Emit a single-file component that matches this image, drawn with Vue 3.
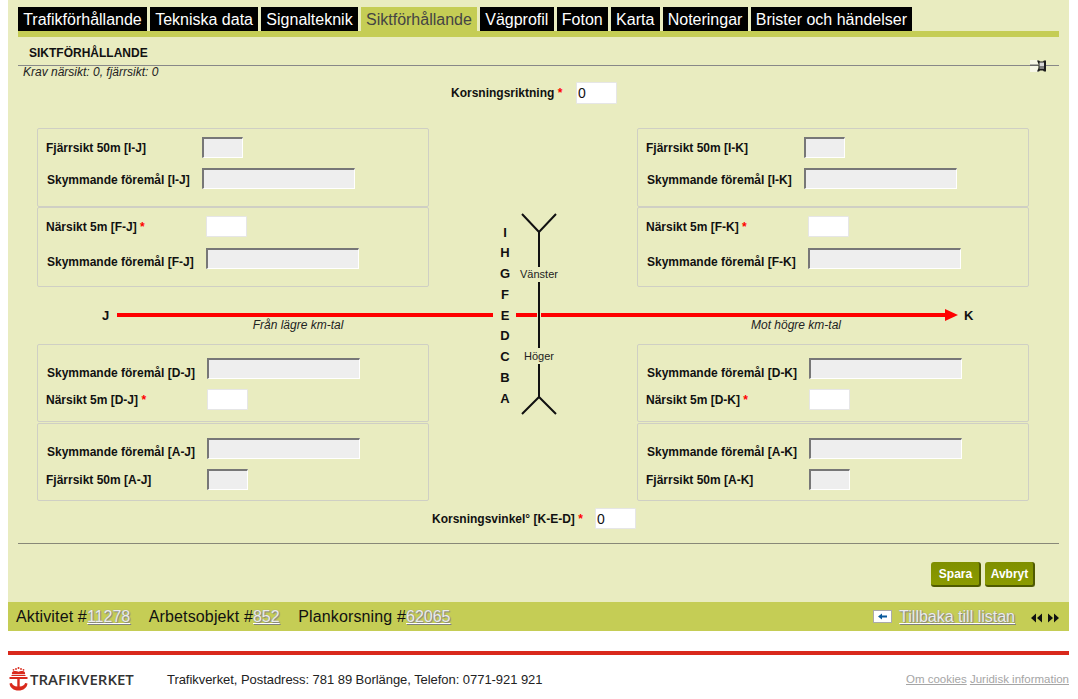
<script setup>
const tabs = ['Trafikförhållande','Tekniska data','Signalteknik','Siktförhållande','Vägprofil','Foton','Karta','Noteringar','Brister och händelser']
const row = (label, wide, disabled, dy = 0, req = false, indent = 0) => ({ label, wide, disabled, dy, req, indent })
const sides = (s, w) => [
  { cls: 'p1', col: w, top: 8, gap: 10, rows: [row(`Fjärrsikt 50m [I-${s}]`, false, true), row(`Skymmande föremål [I-${s}]`, true, true, 1, false, 1)] },
  { cls: 'p2', col: w + 4, top: 8, gap: 11, rows: [row(`Närsikt 5m [F-${s}]`, false, false, 0, true), row(`Skymmande föremål [F-${s}]`, true, true, 3, false, 1)] },
  { cls: 'p3', col: w + 5, top: 13, gap: 10, rows: [row(`Skymmande föremål [D-${s}]`, true, true, 4, false, 1), row(`Närsikt 5m [D-${s}]`, false, false, 0, true)] },
  { cls: 'p4', col: w + 5, top: 14, gap: 10, rows: [row(`Skymmande föremål [A-${s}]`, true, true, 3, false, 1), row(`Fjärrsikt 50m [A-${s}]`, false, true)] },
]
const left = sides('J', 164)
const right = sides('K', 166)
const letters = ['I','H','G','F','E','D','C','B','A']
const stacks = [
  { cls: 'col-left r-top', panels: left.slice(0, 2) },
  { cls: 'col-right r-top', panels: right.slice(0, 2) },
  { cls: 'col-left r-bottom', panels: left.slice(2) },
  { cls: 'col-right r-bottom', panels: right.slice(2) },
]
</script>

<template>
  <div class="page">
    <main class="main">
      <nav class="tabs">
        <a v-for="t in tabs" :key="t" class="tab" :class="{ active: t === 'Siktförhållande' }">{{ t }}</a>
      </nav>
      <div class="tabbar"></div>

      <div class="heading">
        <h2>SIKTFÖRHÅLLANDE</h2>
        <svg class="pin" width="17" height="12" viewBox="0 0 17 12">
          <rect width="8" height="12" fill="#f6f6e6"/>
          <rect x="0" y="4.500" width="8" height="1.500" fill="#666"/>
          <path d="M7 .5h2l1 1h3l1-1h2v11h-2l-1-1h-3l-1 1H7l1.500-3.500V4z" fill="#1c1c1c"/>
          <rect x="9.500" y="2.500" width="4.500" height="4" fill="#d8d8d8"/>
          <rect x="9.500" y="6.500" width="4.500" height="2.500" fill="#808080"/>
        </svg>
      </div>
      <p class="krav">Krav närsikt: 0, fjärrsikt: 0</p>

      <div class="direction">
        <label>Korsningsriktning <span class="req">*</span></label>
        <input class="field" value="0" />
      </div>

      <section class="board">
        <div v-for="s in stacks" :key="s.cls" class="stack" :class="s.cls">
          <div v-for="p in s.panels" :key="p.cls" class="panel" :class="p.cls" :style="{ paddingTop: p.top + 'px', rowGap: p.gap + 'px', gridTemplateColumns: p.col + 'px auto' }">
            <template v-for="r in p.rows" :key="r.label">
              <label :style="{ marginTop: r.dy * 2 + 'px', paddingLeft: 8 + r.indent + 'px' }">{{ r.label }} <span v-if="r.req" class="req">*</span></label>
              <input class="field" :class="{ wide: r.wide }" :disabled="r.disabled" />
            </template>
          </div>
        </div>

        <div class="diagram">
          <svg width="992" height="373" viewBox="0 0 992 373">
            <g fill="#ff0000">
              <rect x="80" y="185" width="376" height="4"/>
              <rect x="479" y="185" width="21" height="4"/>
              <rect x="504" y="185" width="405" height="4"/>
              <path d="M908 181l13 6-13 6z"/>
            </g>
            <g fill="none" stroke="#111" stroke-width="2">
              <path d="M485 86l17 18 17-18"/>
              <path d="M485 286l17-17 17 17"/>
              <path d="M502 104v35M502 154v66M502 236v33"/>
            </g>
          </svg>
          <div class="letters"><span v-for="l in letters" :key="l">{{ l }}</span></div>
          <span class="end end-j">J</span>
          <span class="end end-k">K</span>
          <span class="cap cap-l">Från lägre km-tal</span>
          <span class="cap cap-r">Mot högre km-tal</span>
          <span class="turn turn-v">Vänster</span>
          <span class="turn turn-h">Höger</span>
        </div>
      </section>

      <div class="angle">
        <label>Korsningsvinkel° [K-E-D] <span class="req">*</span></label>
        <input class="field" value="0" />
      </div>

      <hr class="rule" />

      <div class="actions">
        <button class="btn">Spara</button>
        <button class="btn">Avbryt</button>
      </div>
    </main>

    <div class="status">
      <span class="crumb">Aktivitet #<a class="ghost">11278</a></span>
      <span class="crumb">Arbetsobjekt #<a class="ghost">852</a></span>
      <span class="crumb">Plankorsning #<a class="ghost">62065</a></span>
      <span class="status-right">
        <svg class="back" width="19" height="13" viewBox="0 0 19 13">
          <rect x=".5" y=".5" width="18" height="12" fill="#fff" stroke="#aaa"/>
          <path d="M5 6.500l4-3v2h5v2H9v2z" fill="#0b5a9c"/>
        </svg>
        <a class="ghost">Tillbaka till listan</a>
        <svg class="pager" width="28" height="10" viewBox="0 0 28 10">
          <path d="M0 5l5-4.500v9zM6 5l5-4.500v9zM17 .5l5 4.500-5 4.500zM23 .5l5 4.500-5 4.500z" fill="#111"/>
        </svg>
      </span>
    </div>

    <div class="redline"></div>

    <footer class="footer">
      <div class="logo">
        <svg width="21" height="24" viewBox="0 0 21 24">
          <g fill="#d9291c">
            <circle cx="10.500" cy="1.100" r="1"/>
            <circle cx="5.500" cy="2.800" r=".9"/>
            <circle cx="15.500" cy="2.800" r=".9"/>
            <circle cx="8" cy="2" r=".9"/>
            <circle cx="13" cy="2" r=".9"/>
            <path d="M4 7.200C3.500 5.500 4.500 4.200 6.500 4c1.600-.2 3 .1 4 .7 1-.6 2.400-.9 4-.7 2 .2 3 1.500 2.500 3.200z"/>
            <path d="M1.500 10h18v2h-7.800v7.500c2.800-.2 4.700-1.400 5.500-3.500l2.300.5C19 20.800 15.500 23.500 10.500 23.500S2 20.800 1.500 16.500l2.300-.5c.8 2.100 2.700 3.300 5.500 3.500V12H1.500z"/>
            <rect x="3.500" y="8" width="14" height="1"/>
          </g>
        </svg>
        <span class="wordmark">TRAFIKVERKET</span>
      </div>
      <span class="addr">Trafikverket, Postadress: 781 89 Borlänge, Telefon: 0771-921 921</span>
      <span class="foot-links"><a>Om cookies</a> <a>Juridisk information</a></span>
    </footer>
  </div>
</template>

<style>
html, body { margin: 0; background: #fff; }
</style>

<style scoped>
.page {
  width: 1061px;
  margin-left: 8px;
  font-family: "Liberation Sans", Arial, sans-serif;
  color: #111;
}
.main {
  background: #e9ecc0;
  padding: 7px 10px 15px;
  height: 602px;
  box-sizing: border-box;
}
.tabs { display: flex; gap: 3px; height: 24px; }
.tab {
  background: #000;
  color: #fff;
  font-size: 16px;
  line-height: 25px;
  padding: 0 5.200px;
  white-space: nowrap;
}
.tab.active { background: #c5cd55; color: #444; }
.tabbar { height: 6px; background: #c5cd55; }
.heading {
  position: relative;
  margin-top: 9px;
  height: 19px;
  border-bottom: 1px solid #888;
}
.heading h2 {
  margin: 0 0 0 11px;
  font-size: 12px;
  line-height: 14px;
  font-weight: bold;
}
.pin { position: absolute; right: 12px; top: 14px; }
.krav {
  margin: 0 0 0 5px;
  font-size: 12px;
  line-height: 12px;
  font-style: italic;
  color: #222;
}
label { font-size: 12px; font-weight: bold; white-space: nowrap; }
.req { color: #f00; }
.field {
  box-sizing: border-box;
  width: 41px;
  height: 21px;
  padding: 0 1px;
  margin: 0;
  border: 1px solid #e6e6e6;
  border-radius: 1px;
  background: #fff;
  font: 14px "Liberation Sans", Arial, sans-serif;
  color: #111;
  outline: none;
}
.field:disabled {
  background: #eee;
  border-style: solid;
  border-width: 2px 1px 1px 2px;
  border-color: #777 #fff #fff #777;
  border-radius: 0;
}
.field.wide { width: 153px; }
.direction {
  display: flex;
  align-items: center;
  margin: 4px 0 0 433px;
  height: 22px;
}
.direction label { width: 125px; }
.direction .field { height: 22px; }
.board {
  display: grid;
  grid-template-columns: 392px 208px 392px;
  grid-template-rows: 159px 57px 157px;
  margin: 24px 0 0 19px;
  width: 992px;
}
.stack { display: flex; flex-direction: column; }
.col-left { grid-column: 1; }
.col-right { grid-column: 3; }
.r-top { grid-row: 1; }
.r-bottom { grid-row: 3; }
.panel {
  display: grid;
  grid-auto-rows: 21px;
  align-items: center;
  align-content: start;
  box-sizing: border-box;
  border: 1px solid #cfcfc4;
  border-radius: 2px;
  justify-items: start;
}
.panel label { line-height: 14px; }
.panel.p1 { height: 79px; }
.panel.p2 { height: 80px; }
.panel.p3 { height: 78px; margin-bottom: 1px; }
.panel.p4 { height: 78px; }
.diagram {
  grid-row: 1 / 4;
  grid-column: 1 / 4;
  position: relative;
  pointer-events: none;
}
.diagram svg { display: block; }
.letters {
  position: absolute;
  left: 460px;
  top: 94.500px;
  width: 16px;
  display: flex;
  flex-direction: column;
  align-items: center;
  font-size: 13px;
  font-weight: bold;
  line-height: 20.800px;
}
.end { position: absolute; top: 181px; font-size: 13px; font-weight: bold; line-height: 14px; }
.end-j { left: 65px; }
.end-k { left: 927px; }
.cap {
  position: absolute;
  top: 190px;
  width: 120px;
  text-align: center;
  font-size: 12px;
  line-height: 14px;
  font-style: italic;
  color: #222;
}
.cap-l { left: 201px; }
.cap-r { left: 699px; }
.turn {
  position: absolute;
  left: 462px;
  width: 80px;
  text-align: center;
  font-size: 11px;
  line-height: 14px;
  color: #222;
}
.turn-v { top: 139px; }
.turn-h { top: 221px; }
.angle {
  display: flex;
  align-items: center;
  margin: 7px 0 0 414px;
  height: 21px;
}
.angle label { width: 163px; }
.rule {
  margin: 14px 0 0;
  border: 0;
  border-top: 1px solid #888878;
}
.actions {
  display: flex;
  justify-content: flex-end;
  gap: 4px;
  margin-top: 18px;
  padding-right: 24px;
}
.btn {
  box-sizing: border-box;
  width: 50px;
  height: 25px;
  padding: 0 0 0 1px;
  border: 0;
  border-right: 2px solid #4f5a00;
  border-bottom: 2px solid #4f5a00;
  border-radius: 3px;
  background: linear-gradient(#7f8f00, #8b9b00);
  color: #fff;
  font: bold 12px "Liberation Sans", Arial, sans-serif;
}
.status {
  display: flex;
  align-items: center;
  gap: 18.500px;
  height: 29px;
  padding-left: 8px;
  background: #c5cd55;
  font-size: 16px;
  color: #111;
}
.crumb { letter-spacing: .140px; }
.ghost {
  color: #ececec;
  letter-spacing: 0;
  text-decoration: underline;
  text-decoration-color: #fff;
  text-shadow: 1px 1px 1px #808080, 0 0 1px #8a8a8a;
}
.status-right {
  margin-left: auto;
  display: flex;
  align-items: center;
  padding-right: 10px;
}
.back { margin-right: 7px; }
.pager { margin-left: 16px; margin-top: 3px; }
.redline { height: 4px; background: #d9291c; margin-top: 20px; }
.footer {
  display: flex;
  align-items: center;
  height: 44px;
  padding-top: 4px;
  box-sizing: border-box;
}
.logo { display: flex; align-items: center; width: 159px; gap: 1px; }
.wordmark {
  font-family: "Open Sans", sans-serif;
  font-size: 15px;
  font-weight: 600;
  color: #333;
  white-space: nowrap;
}
.addr { font-size: 13px; letter-spacing: -.050px; color: #222; white-space: nowrap; }
.foot-links { margin-left: auto; font-size: 11.500px; white-space: nowrap; }
.foot-links a {
  color: #a5a5a5;
  text-decoration: underline;
}
</style>
